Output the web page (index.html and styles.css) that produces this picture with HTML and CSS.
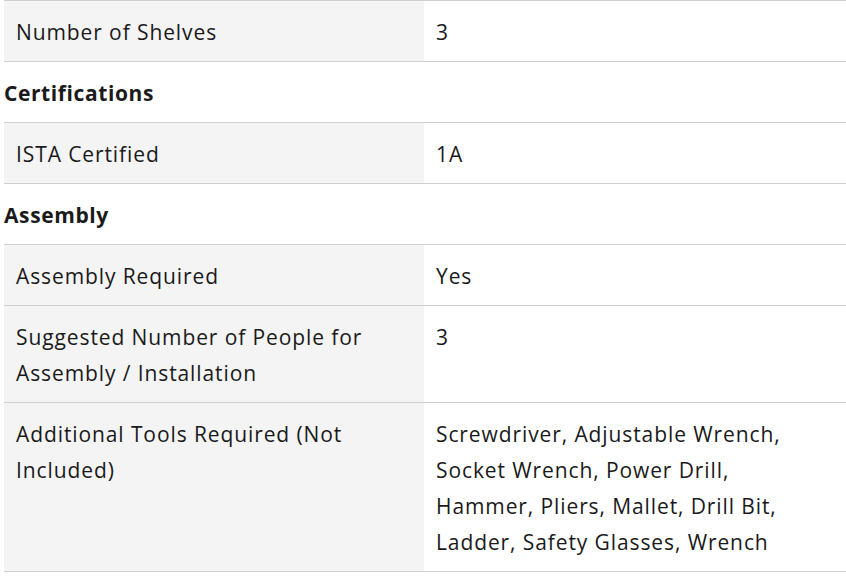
FILE: index.html
```html
<!DOCTYPE html>
<html>
<head>
<meta charset="utf-8">
<link rel="stylesheet" href="styles.css">
</head>
<body>
<div class="specs">
  <div class="row">
    <div class="label">Number of Shelves</div>
    <div class="value">3</div>
  </div>
  <div class="group">Certifications</div>
  <div class="row">
    <div class="label">ISTA Certified</div>
    <div class="value">1A</div>
  </div>
  <div class="group">Assembly</div>
  <div class="row">
    <div class="label">Assembly Required</div>
    <div class="value">Yes</div>
  </div>
  <div class="row">
    <div class="label">Suggested Number of People for Assembly / Installation</div>
    <div class="value">3</div>
  </div>
  <div class="row">
    <div class="label">Additional Tools Required (Not Included)</div>
    <div class="value">Screwdriver, Adjustable Wrench, Socket Wrench, Power Drill, Hammer, Pliers, Mallet, Drill Bit, Ladder, Safety Glasses, Wrench</div>
  </div>
</div>
</body>
</html>
```
FILE: styles.css
```css
html, body {
  margin: 0;
  padding: 0;
  background: #fff;
}
body {
  font-family: "Open Sans", "Noto Sans", sans-serif;
  font-size: 21px;
  line-height: 36px;
  letter-spacing: 0.9px;
  color: #1a1a1a;
}
.specs {
  margin-left: 4px;
  border-top: 1px solid #d0d0d0;
}
.row {
  display: grid;
  grid-template-columns: 420px 1fr;
  border-bottom: 1px solid #d0d0d0;
}
.label {
  background: #f4f4f4;
  padding: 13px 12px 11px 12px;
}
.value {
  padding: 13px 40px 11px 12px;
}
.group {
  font-weight: 700;
  letter-spacing: 0.6px;
  padding: 13px 0 11px;
  border-bottom: 1px solid #d0d0d0;
}
```
